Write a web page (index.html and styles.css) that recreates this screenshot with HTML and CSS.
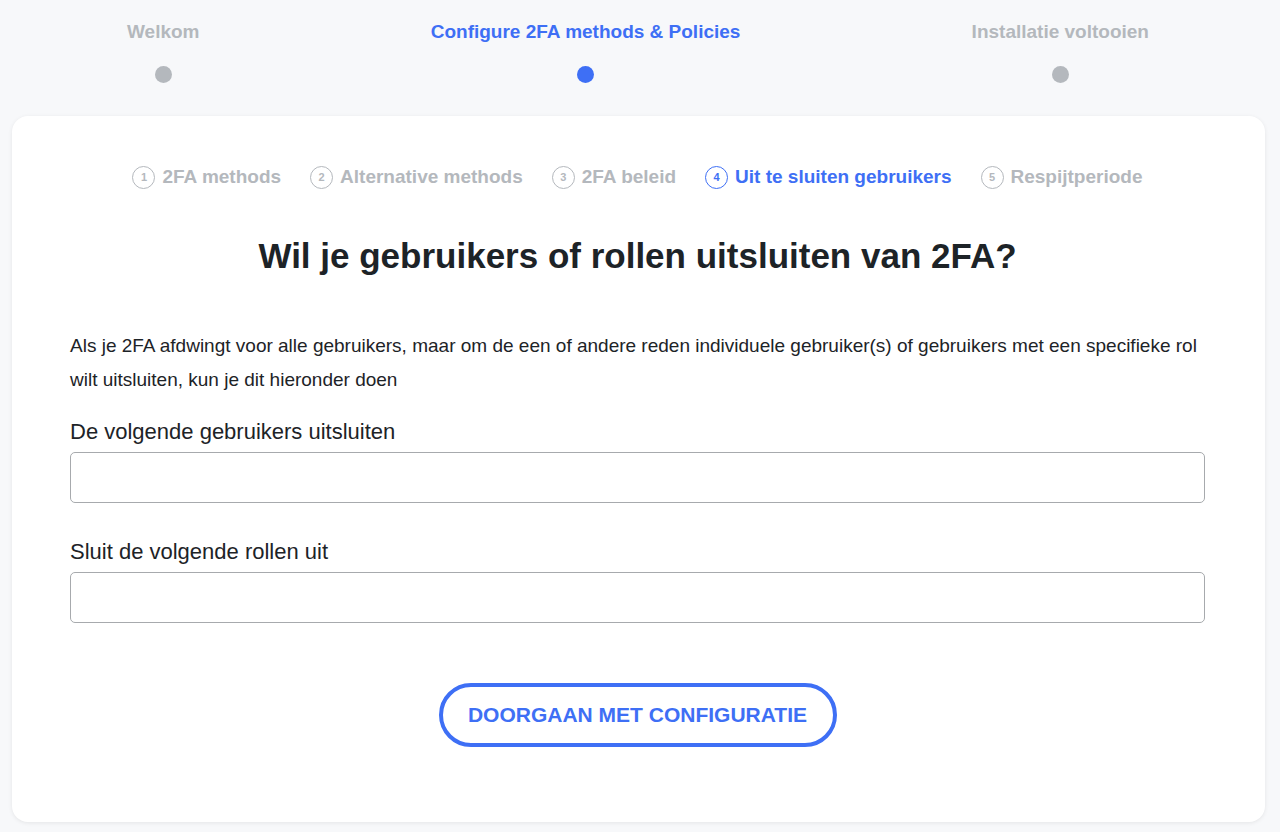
FILE: index.html
```html
<!DOCTYPE html>
<html lang="nl">
<head>
<meta charset="utf-8">
<title>2FA configuratie</title>
<link rel="stylesheet" href="styles.css">
</head>
<body>
<div class="steps">
  <div class="step"><span class="step-label">Welkom</span><span class="dot"></span></div>
  <div class="step active"><span class="step-label">Configure 2FA methods &amp; Policies</span><span class="dot"></span></div>
  <div class="step"><span class="step-label">Installatie voltooien</span><span class="dot"></span></div>
</div>
<main class="card">
  <nav class="substeps">
    <div class="substep"><span class="num">1</span>2FA methods</div>
    <div class="substep"><span class="num">2</span>Alternative methods</div>
    <div class="substep"><span class="num">3</span>2FA beleid</div>
    <div class="substep active"><span class="num">4</span>Uit te sluiten gebruikers</div>
    <div class="substep"><span class="num">5</span>Respijtperiode</div>
  </nav>
  <h1 class="title">Wil je gebruikers of rollen uitsluiten van 2FA?</h1>
  <p class="intro">Als je 2FA afdwingt voor alle gebruikers, maar om de een of andere reden individuele gebruiker(s) of gebruikers met een specifieke rol wilt uitsluiten, kun je dit hieronder doen</p>
  <label class="field">
    <span class="field-label">De volgende gebruikers uitsluiten</span>
    <input class="field-input" type="text">
  </label>
  <label class="field">
    <span class="field-label">Sluit de volgende rollen uit</span>
    <input class="field-input" type="text">
  </label>
  <div class="actions">
    <button class="btn" type="button">DOORGAAN MET CONFIGURATIE</button>
  </div>
</main>
</body>
</html>
```
FILE: styles.css
```css
* { box-sizing: border-box; }
html, body { margin: 0; padding: 0; }
body {
  background: #f7f8fa;
  font-family: "Liberation Sans", Arial, sans-serif;
  color: #1d2327;
  width: 1280px;
  height: 832px;
  overflow: hidden;
}
.steps {
  display: flex;
  justify-content: space-between;
  padding: 21px 131px 0 127px;
  height: 116px;
}
.step {
  display: flex;
  flex-direction: column;
  align-items: center;
}
.step-label {
  font-weight: bold;
  font-size: 19px;
  line-height: 22px;
  color: #b4b8bd;
  white-space: nowrap;
}
.step.active .step-label { color: #3e6ff5; }
.dot {
  width: 17px;
  height: 17px;
  border-radius: 50%;
  background: #b4b8bd;
  margin-top: 23px;
}
.step.active .dot { background: #3e6ff5; }

.card {
  margin: 0 15px 0 12px;
  background: #fff;
  border-radius: 16px;
  box-shadow: 0 1px 4px rgba(0,0,0,0.08);
  padding: 48px 60px 75px 58px;
}
.substeps {
  display: flex;
  justify-content: center;
  gap: 29px;
  height: 26px;
  align-items: center;
}
.substep {
  display: flex;
  align-items: center;
  font-weight: bold;
  font-size: 19px;
  color: #b4b8bd;
  white-space: nowrap;
}
.substep.active { color: #3e6ff5; }
.num {
  width: 23px;
  height: 23px;
  border: 1.5px solid #b4b8bd;
  border-radius: 50%;
  font-size: 11px;
  font-weight: bold;
  display: flex;
  align-items: center;
  justify-content: center;
  margin-right: 7px;
}
.substep.active .num { border-color: #3e6ff5; }
.title {
  text-align: center;
  font-size: 35px;
  font-weight: bold;
  margin: 46px 0 0;
  line-height: 40px;
}
.intro {
  font-size: 19px;
  line-height: 34px;
  margin: 53px 0 0;
}
.field {
  display: block;
  margin-top: 22px;
}
.field + .field { margin-top: 36px; }
.field-label {
  display: block;
  font-size: 22px;
  line-height: 26px;
  margin-bottom: 7px;
  color: #1d2327;
}
.field-input {
  display: block;
  width: 100%;
  height: 51px;
  border: 1px solid #a7aaad;
  border-radius: 5px;
  background: #fff;
  font: inherit;
  outline: none;
}
.actions {
  display: flex;
  justify-content: center;
  margin-top: 60px;
}
.btn {
  width: 398px;
  height: 64px;
  border: 4px solid #3e6ff5;
  border-radius: 32px;
  background: #fff;
  color: #3e6ff5;
  font-family: "Liberation Sans", Arial, sans-serif;
  font-weight: bold;
  font-size: 21px;
  cursor: pointer;
}
```
